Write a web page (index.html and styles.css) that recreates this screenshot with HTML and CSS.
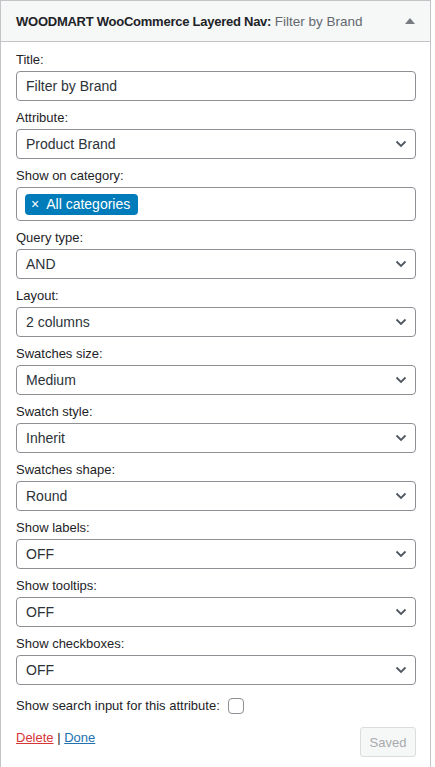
FILE: index.html
```html
<!DOCTYPE html>
<html>
<head>
<meta charset="utf-8">
<link rel="stylesheet" href="styles.css">
</head>
<body>
<div class="widget">
  <div class="widget-top">
    <h3 class="widget-title"><span class="strong">WOODMART WooCommerce Layered Nav</span><span class="colon">:</span> <span class="in-title">Filter by Brand</span></h3>
    <span class="toggle">
      <svg width="10" height="6" viewBox="0 0 10 6"><path d="M0 6 L5 0 L10 6 Z" fill="#787c82"/></svg>
    </span>
  </div>
  <div class="widget-inside">
    <div class="field">
      <label class="label">Title:</label>
      <div class="input">Filter by Brand</div>
    </div>
    <div class="field">
      <label class="label">Attribute:</label>
      <div class="select">Product Brand<svg class="chev" width="12" height="8" viewBox="0 0 12 8"><path d="M1.5 1.5 L6 6 L10.5 1.5" fill="none" stroke="#50575e" stroke-width="1.8"/></svg></div>
    </div>
    <div class="field">
      <label class="label">Show on category:</label>
      <div class="multi"><span class="tag"><span class="x">×</span>All categories</span></div>
    </div>
    <div class="field">
      <label class="label">Query type:</label>
      <div class="select">AND<svg class="chev" width="12" height="8" viewBox="0 0 12 8"><path d="M1.5 1.5 L6 6 L10.5 1.5" fill="none" stroke="#50575e" stroke-width="1.8"/></svg></div>
    </div>
    <div class="field">
      <label class="label">Layout:</label>
      <div class="select">2 columns<svg class="chev" width="12" height="8" viewBox="0 0 12 8"><path d="M1.5 1.5 L6 6 L10.5 1.5" fill="none" stroke="#50575e" stroke-width="1.8"/></svg></div>
    </div>
    <div class="field">
      <label class="label">Swatches size:</label>
      <div class="select">Medium<svg class="chev" width="12" height="8" viewBox="0 0 12 8"><path d="M1.5 1.5 L6 6 L10.5 1.5" fill="none" stroke="#50575e" stroke-width="1.8"/></svg></div>
    </div>
    <div class="field">
      <label class="label">Swatch style:</label>
      <div class="select">Inherit<svg class="chev" width="12" height="8" viewBox="0 0 12 8"><path d="M1.5 1.5 L6 6 L10.5 1.5" fill="none" stroke="#50575e" stroke-width="1.8"/></svg></div>
    </div>
    <div class="field">
      <label class="label">Swatches shape:</label>
      <div class="select">Round<svg class="chev" width="12" height="8" viewBox="0 0 12 8"><path d="M1.5 1.5 L6 6 L10.5 1.5" fill="none" stroke="#50575e" stroke-width="1.8"/></svg></div>
    </div>
    <div class="field">
      <label class="label">Show labels:</label>
      <div class="select">OFF<svg class="chev" width="12" height="8" viewBox="0 0 12 8"><path d="M1.5 1.5 L6 6 L10.5 1.5" fill="none" stroke="#50575e" stroke-width="1.8"/></svg></div>
    </div>
    <div class="field">
      <label class="label">Show tooltips:</label>
      <div class="select">OFF<svg class="chev" width="12" height="8" viewBox="0 0 12 8"><path d="M1.5 1.5 L6 6 L10.5 1.5" fill="none" stroke="#50575e" stroke-width="1.8"/></svg></div>
    </div>
    <div class="field">
      <label class="label">Show checkboxes:</label>
      <div class="select">OFF<svg class="chev" width="12" height="8" viewBox="0 0 12 8"><path d="M1.5 1.5 L6 6 L10.5 1.5" fill="none" stroke="#50575e" stroke-width="1.8"/></svg></div>
    </div>
    <div class="check-row">
      <span class="label">Show search input for this attribute:</span>
      <span class="checkbox"></span>
    </div>
    <div class="actions">
      <div class="links"><a class="delete">Delete</a><span class="sep"> | </span><a class="done">Done</a></div>
      <span class="saved">Saved</span>
    </div>
  </div>
</div>
</body>
</html>
```
FILE: styles.css
```css
html, body {
  margin: 0;
  padding: 0;
  background: #ffffff;
}
body {
  font-family: "Liberation Sans", Arial, sans-serif;
  color: #1d2327;
  font-size: 13px;
}
.widget {
  width: 431px;
  box-sizing: border-box;
  border: 1px solid #c3c4c7;
  border-bottom: none;
  height: 767px;
}
.widget-top {
  height: 40px;
  background: #f6f7f7;
  border-bottom: 1px solid #c3c4c7;
  display: flex;
  align-items: center;
  justify-content: space-between;
  padding: 0 15px;
}
.widget-title {
  margin: 0;
  font-size: 13px;
  font-weight: 400;
  color: #1d2327;
  white-space: nowrap;
}
.strong, .colon {
  font-weight: 700;
  letter-spacing: -0.25px;
}
.in-title {
  color: #646970;
  font-size: 13.5px;
}
.toggle {
  display: flex;
  margin-right: 0;
}
.widget-inside {
  padding: 9px 14px 0 15px;
  display: flex;
  flex-direction: column;
  gap: 8px;
}
.field {
  display: flex;
  flex-direction: column;
  gap: 2px;
}
.label {
  font-size: 13px;
  line-height: 18px;
  color: #1d2327;
}
.input, .select {
  box-sizing: border-box;
  height: 30px;
  border: 1px solid #8c8f94;
  border-radius: 4px;
  padding: 0 9px;
  font-size: 14px;
  color: #2c3338;
  display: flex;
  align-items: center;
  justify-content: space-between;
}
.chev {
  margin-right: -1px;
}
.multi {
  box-sizing: border-box;
  height: 34px;
  border: 1px solid #8c8f94;
  border-radius: 4px;
  padding: 0 8px;
  display: flex;
  align-items: center;
}
.tag {
  background: #007cba;
  color: #ffffff;
  border-radius: 4px;
  height: 21px;
  font-size: 14px;
  display: flex;
  align-items: center;
  padding: 0 8px 0 6px;
}
.x {
  font-size: 14px;
  margin-right: 7px;
}
.check-row {
  display: flex;
  align-items: center;
  gap: 8px;
  margin-top: 4px;
}
.checkbox {
  width: 16px;
  height: 16px;
  box-sizing: border-box;
  border: 1px solid #8c8f94;
  border-radius: 4px;
  background: #fff;
}
.actions {
  display: flex;
  justify-content: space-between;
  align-items: flex-start;
  margin-top: 4px;
}
.links {
  font-size: 13px;
  line-height: 18px;
  padding-top: 2px;
}
.delete {
  color: #d63638;
  text-decoration: underline;
}
.sep {
  color: #1d2327;
}
.done {
  color: #2271b1;
  text-decoration: underline;
}
.saved {
  box-sizing: border-box;
  height: 30px;
  width: 56px;
  border: 1px solid #dcdcde;
  border-radius: 3px;
  background: #f6f7f7;
  color: #a7aaad;
  font-size: 13px;
  display: flex;
  align-items: center;
  justify-content: center;
}
```
